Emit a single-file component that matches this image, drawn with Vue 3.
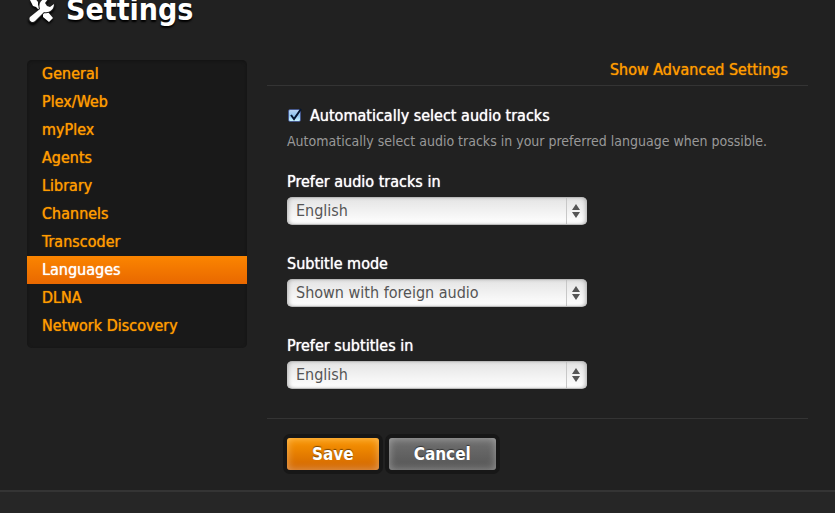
<script setup>
import { ref } from 'vue'

const sections = [
  'General', 'Plex/Web', 'myPlex', 'Agents', 'Library',
  'Channels', 'Transcoder', 'Languages', 'DLNA', 'Network Discovery',
]
const active = ref('Languages')
const autoSelect = ref(true)
const fields = ref([
  { id: 'audio', label: 'Prefer audio tracks in', value: 'English', options: ['English'] },
  {
    id: 'mode',
    label: 'Subtitle mode',
    value: 'Shown with foreign audio',
    options: ['Shown with foreign audio'],
  },
  { id: 'subtitles', label: 'Prefer subtitles in', value: 'English', options: ['English'] },
])
</script>

<template>
  <div class="page">
    <header class="header">
      <svg class="tools" viewBox="0 0 25 27" aria-hidden="true">
        <path class="tool" d="M1 4 L5 1 L9 6 L9 9 L16 16 L19 16 L24 22 L20 26 L14 21 L14 18 L7 11 L4 10 Z" />
        <path
          class="tool wrench"
          d="M1 21 L11 13 C9 7 13 2 19 3 L16 7 L18 10 L21 11 L25 8 C25 14 20 17 15 16 L6 25 C3 28 -1 24 1 21 Z"
        />
      </svg>
      <h1>Settings</h1>
    </header>

    <main class="layout">
      <nav class="nav">
        <a
          v-for="name in sections"
          :key="name"
          href="#"
          :class="{ active: name === active }"
          @click.prevent="active = name"
        >{{ name }}</a>
      </nav>

      <form class="panel" @submit.prevent>
        <div class="panel-top">
          <a href="#" @click.prevent>Show Advanced Settings</a>
        </div>

        <div class="fields">
          <div class="check-row">
            <span class="check">
              <input id="auto" v-model="autoSelect" type="checkbox" />
              <svg v-if="autoSelect" viewBox="0 0 16 16" aria-hidden="true">
                <path d="M4 7 L7 11 L14 1" />
              </svg>
            </span>
            <label for="auto">Automatically select audio tracks</label>
          </div>
          <p class="help">
            Automatically select audio tracks in your preferred language when possible.
          </p>

          <div v-for="field in fields" :key="field.id" class="field">
            <label :for="field.id">{{ field.label }}</label>
            <div class="select">
              <select :id="field.id" v-model="field.value">
                <option v-for="option in field.options" :key="option">{{ option }}</option>
              </select>
              <svg class="arrows" viewBox="0 0 8 14" aria-hidden="true">
                <path d="M4 0 L8 6 H0 Z M0 8 H8 L4 14 Z" />
              </svg>
            </div>
          </div>
        </div>

        <div class="actions">
          <button type="submit" class="button save">Save</button>
          <button type="button" class="button cancel">Cancel</button>
        </div>
      </form>
    </main>

    <footer class="footer"></footer>
  </div>
</template>

<style>
body {
  background: #262626;
}
</style>

<style scoped>
.page {
  display: flex;
  flex-direction: column;
  min-height: 100vh;
  overflow: hidden;
  box-sizing: border-box;
  background: #212121;
  color: #fff;
  font-family: "DejaVu Sans Condensed", "DejaVu Sans", sans-serif;
  font-size: 16px;
  line-height: 20px;
}

.header {
  display: flex;
  align-items: flex-start;
  gap: 12px;
  height: 60px;
  padding-left: 29px;
}

.tools {
  width: 25px;
  height: 27px;
  margin-top: -4px;
  overflow: visible;
  filter: drop-shadow(0 2px 1px #000);
}

.tool {
  fill: #fff;
}

.wrench {
  stroke: #212121;
  stroke-width: 2px;
  paint-order: stroke;
}

h1 {
  margin: -6px 0 0;
  font-size: 30px;
  line-height: 32px;
  text-shadow: 0 2px 2px #000;
}

a {
  color: #ff9b00;
  text-decoration: none;
}

a,
label {
  text-shadow: 0 0 1px currentColor;
}

.layout {
  display: flex;
  align-items: flex-start;
  gap: 20px;
  padding: 0 27px 12px;
}

.nav {
  display: flex;
  flex-direction: column;
  flex: 0 0 220px;
  padding-bottom: 8px;
  border-radius: 5px;
  background: #191919;
  box-shadow: inset 0 1px 3px #131313;
}

.nav a {
  padding: 4px 15px;
}

.nav .active {
  background: linear-gradient(#fb8500, #e96800);
  color: #fff;
}

.panel {
  flex: 1;
  min-width: 0;
}

.panel-top {
  padding: 0 20px 5px;
  border-bottom: 1px solid #343434;
  text-align: right;
}

.fields {
  padding: 20px 20px 29px;
}

.check-row {
  display: flex;
  align-items: center;
  gap: 7px;
}

.check {
  position: relative;
  display: flex;
  width: 16px;
  height: 16px;
}

.check input {
  appearance: none;
  width: 13px;
  height: 13px;
  margin: 1px 0 0 1px;
  border: 1px solid #46588c;
  border-radius: 2px;
  background: linear-gradient(#b9d4f2, #8fc4ee 50%, #c9f3ff);
}

.check svg {
  position: absolute;
  inset: 0;
  pointer-events: none;
}

.check path {
  fill: none;
  stroke: #061630;
  stroke-width: 2px;
}

.help {
  margin: 5px 0 21px;
  color: #999;
  font-size: 14px;
}

.field + .field {
  margin-top: 29px;
}

.field label {
  display: block;
  margin-bottom: 5px;
}

.select {
  position: relative;
  max-width: 300px;
}

.select select {
  display: block;
  appearance: none;
  width: 100%;
  height: 28px;
  padding: 0 32px 1px 9px;
  border: 1px solid #bbb;
  border-width: 1px 0;
  border-radius: 5px;
  background:
    linear-gradient(#c8c8c8, #c8c8c8) right 20px top 0 / 1px 100% no-repeat,
    linear-gradient(#e4e4e4, #fff);
  box-shadow: inset 3px 0 4px -2px #aaa, inset -3px 0 4px -2px #aaa;
  color: #555;
  font: inherit;
}

.arrows {
  position: absolute;
  top: 7px;
  right: 7px;
  width: 8px;
  height: 14px;
  fill: #555;
  pointer-events: none;
}

.actions {
  display: flex;
  gap: 10px;
  padding: 19px 20px 8px;
  border-top: 1px solid #343434;
}

.button {
  height: 32px;
  padding: 0 25px;
  border: 0;
  border-radius: 3px;
  color: #fff;
  font: inherit;
  font-size: 17px;
  font-weight: bold;
  text-shadow: 0 -1px 1px rgba(0, 0, 0, 0.5);
}

.save {
  background: linear-gradient(#fb9700, #d06400);
  box-shadow: 0 0 0 4px #171717, inset 0 0 8px rgba(255, 255, 255, 0.4);
}

.cancel {
  background: linear-gradient(#707070, #555);
  box-shadow: 0 0 0 4px #171717, inset 0 0 8px rgba(255, 255, 255, 0.4);
}

.footer {
  flex: 1;
  border-top: 2px solid #343434;
  background: #262626;
}
</style>
